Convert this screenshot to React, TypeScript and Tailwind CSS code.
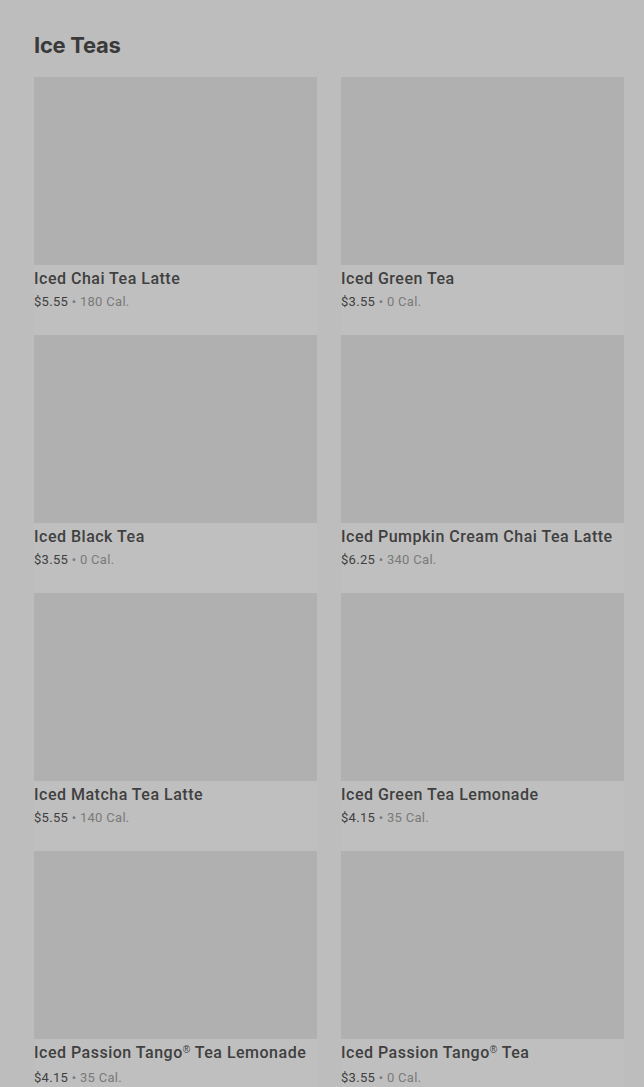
const items = [
  { name: 'Iced Chai Tea Latte', price: '$5.55', cal: '180 Cal.' },
  { name: 'Iced Green Tea', price: '$3.55', cal: '0 Cal.' },
  { name: 'Iced Black Tea', price: '$3.55', cal: '0 Cal.' },
  { name: 'Iced Pumpkin Cream Chai Tea Latte', price: '$6.25', cal: '340 Cal.' },
  { name: 'Iced Matcha Tea Latte', price: '$5.55', cal: '140 Cal.' },
  { name: 'Iced Green Tea Lemonade', price: '$4.15', cal: '35 Cal.' },
  { name: 'Iced Passion Tango® Tea Lemonade', price: '$4.15', cal: '35 Cal.' },
  { name: 'Iced Passion Tango® Tea', price: '$3.55', cal: '0 Cal.' },
]

// render ® as a small raised mark like the menu does
function Name({ text }: { text: string }) {
  const parts = text.split('®')
  return (
    <>
      {parts.map((p, i) => (
        <span key={i}>
          {p}
          {i < parts.length - 1 && (
            <span
              className="text-[10px] relative -top-[5px]"
              style={{ fontFamily: '"Liberation Sans", sans-serif' }}
            >
              {'\u00AE\uFE0E'}
            </span>
          )}
        </span>
      ))}
    </>
  )
}

function MenuCard({ name, price, cal }: { name: string; price: string; cal: string }) {
  return (
    <div className="h-[258px] bg-[#bfbfbf]">
      {/* image placeholder */}
      <div className="h-[188px] bg-[#b0b0b0]" />
      <div className="pt-[3px]">
        <div className="text-[16px] leading-[22px] font-medium text-[#404040] tracking-[0.5px]">
          <Name text={name} />
        </div>
        <div className="text-[13px] leading-[22px] text-[#7a7a7a] tracking-[0.3px] mt-[1px]">
          <span className="text-[#404040]">{price}</span> • {cal}
        </div>
      </div>
    </div>
  )
}

export default function App() {
  return (
    <div
      className="min-h-[1087px] bg-[#bdbdbd] pl-[34px] pr-[20px] pt-[30px]"
      style={{ fontFamily: 'Roboto, "Noto Sans", sans-serif' }}
    >
      <h2
        className="text-[22px] leading-[30px] font-bold text-[#3a3a3a] mb-[17px] tracking-[-0.3px]"
        style={{ fontFamily: 'Inter, sans-serif' }}
      >
        Ice Teas
      </h2>
      <div className="grid grid-cols-2 gap-x-[24px]">
        {items.map((it) => (
          <MenuCard key={it.name} {...it} />
        ))}
      </div>
    </div>
  )
}
